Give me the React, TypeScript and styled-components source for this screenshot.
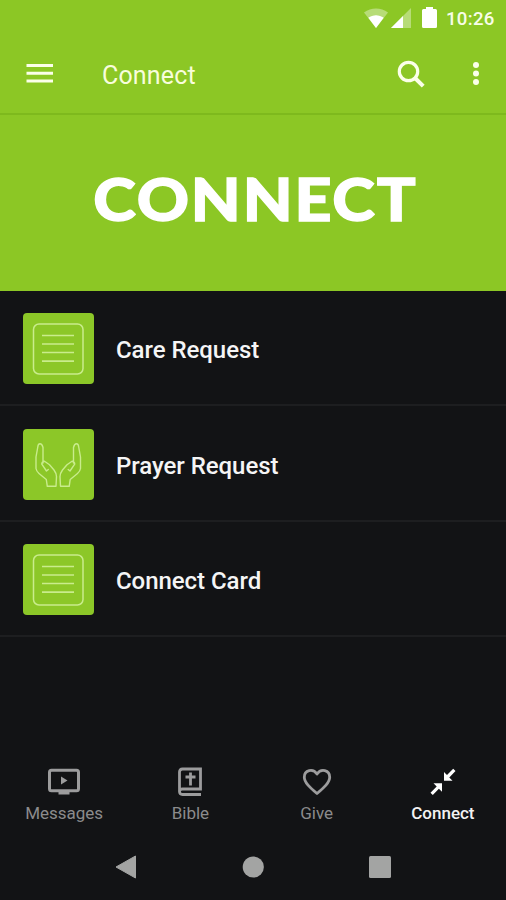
import React from "react";
import styled, { createGlobalStyle } from "styled-components";

const GlobalStyle = createGlobalStyle`
  *, *::before, *::after { box-sizing: border-box; }
  body { margin: 0; background: #121315; font-family: Roboto, sans-serif; }
  svg { display: block; flex: none; }
`;

const Screen = styled.main`
  width: 506px;
  height: 900px;
  display: flex;
  flex-direction: column;
  overflow: hidden;
  background: #121315;
  color: #fff;
`;

const Header = styled.header`
  height: 115px;
  background: #8cc725;
  border-bottom: 2px solid #7eb91d;
`;

const StatusBar = styled.div`
  height: 37px;
  display: flex;
  align-items: center;
  justify-content: flex-end;
  padding-right: 11px;
`;

const Clock = styled.span`
  width: 49px;
  margin-left: 10px;
  padding-top: 1px;
  font-size: 18.6px;
  line-height: 37px;
  font-weight: 500;
  letter-spacing: 0.3px;
  color: #f8fde9;
  white-space: nowrap;
`;

const Toolbar = styled.div`
  height: 74px;
  display: flex;
  align-items: center;
  padding: 0 26px 0 26px;
`;

const IconButton = styled.button`
  display: flex;
  padding: 0;
  border: 0;
  background: none;
  color: #fbffe9;
`;

const Title = styled.h1`
  flex: 1;
  margin: 3px 0 0 48px;
  font-size: 25px;
  line-height: 30px;
  font-weight: 400;
  letter-spacing: 0.15px;
  color: #f8fddc;
`;

const Actions = styled.div`
  display: flex;
  align-items: center;
  gap: 47px;
`;

const Banner = styled.section`
  height: 175.5px;
  display: flex;
  align-items: center;
  justify-content: center;
  background: #8cc725;
`;

const BannerText = styled.h2`
  margin: 0 0 9px 5px;
  font-family: Lato, sans-serif;
  font-size: 59.5px;
  line-height: 72px;
  font-weight: 900;
  letter-spacing: 1.7px;
  white-space: nowrap;
  -webkit-text-stroke: 1.3px #fff;
  transform: scaleX(1.085);
`;

const List = styled.nav`
  flex: 1;
`;

const Row = styled.a`
  height: 115.5px;
  display: flex;
  align-items: center;
  padding-left: 23px;
  gap: 22px;
  border-bottom: 2px solid #1d1e20;
`;

const Tile = styled.span`
  width: 71px;
  height: 71px;
  margin-top: 3px;
  border-radius: 4px;
  background: #8cc728;
  color: #c9ec8c;
`;

const RowLabel = styled.span`
  margin-top: 6px;
  font-size: 24px;
  line-height: 30px;
  font-weight: 500;
  letter-spacing: -0.05px;
  color: #f5f5f5;
`;

const Tabs = styled.nav`
  height: 67px;
  display: grid;
  grid-template-columns: repeat(4, 1fr);
  padding-left: 1px;
`;

const Tab = styled.a<{ $active?: boolean }>`
  display: flex;
  flex-direction: column;
  align-items: center;
  color: ${(p) => (p.$active ? "#fff" : "#9c9c9d")};
`;

const TabLabel = styled.span<{ $active?: boolean }>`
  margin-top: 6px;
  font-size: 17px;
  line-height: 20px;
  font-weight: ${(p) => (p.$active ? 500 : 400)};
  color: ${(p) => (p.$active ? "#f2f2f2" : "#8b8b8c")};
`;

const SystemBar = styled.footer`
  height: 66px;
  display: flex;
  justify-content: center;
  align-items: center;
  gap: 105px;
  color: #a3a4a3;
`;

const WifiIcon = () => (
  <svg width="24" height="20" viewBox="0 0 24 20">
    <path d="M12 20 0 4.600C7 -.9 17-.9 24 4.600Z" fill="#fff" opacity=".38" />
    <path d="M12 20 4.300 9.800c4.600-3.400 10.800-3.400 15.400 0Z" fill="#fff" />
  </svg>
);

const SignalIcon = () => (
  <svg width="20" height="20" viewBox="0 0 20 20">
    <path d="M20 0v20H0Z" fill="#fff" opacity=".38" />
    <path d="M12 8v12H0Z" fill="#fff" />
  </svg>
);

const BatteryIcon = () => (
  <svg width="15" height="21" viewBox="0 0 15 21">
    <path d="M4 0h7v2h2.500q1.500 0 1.500 1.500v16q0 1.500-1.500 1.500h-12Q0 21 0 19.500v-16Q0 2 1.500 2H4Z" fill="#fff" />
  </svg>
);

const StatusIcons = styled.div`
  display: flex;
  align-items: center;
  margin: 0 -1px 2px 0;
  svg + svg { margin-left: 3px; }
  svg:last-child { margin-left: 11px; }
`;

const MenuIcon = () => (
  <svg width="28" height="20" viewBox="0 0 28 20" fill="currentColor">
    <path d="M.5 0h26.500v3H.5zM.5 7.700h26.500v3H.5zM.5 15.500h26.500v3H.5z" />
  </svg>
);

const SearchIcon = () => (
  <svg width="28" height="28" viewBox="0 0 28 28" fill="none" stroke="currentColor">
    <circle cx="11.500" cy="11.500" r="9.200" strokeWidth="3.200" />
    <path d="m18 18 8.200 8.200" strokeWidth="4" />
  </svg>
);

const MoreIcon = () => (
  <svg width="8" height="24" viewBox="0 0 8 24" fill="currentColor">
    <circle cx="4" cy="3" r="3" />
    <circle cx="4" cy="11.500" r="3" />
    <circle cx="4" cy="20" r="3" />
  </svg>
);

const FormIcon = () => (
  <svg width="71" height="71" viewBox="0 0 71 71" fill="none" stroke="currentColor" strokeWidth="1.500">
    <rect x="10.500" y="11" width="49.500" height="50" rx="5.500" />
    <path d="M19 22.500h32M19 31h32M19 39.500h32M19 48.200h32" strokeWidth="1.700" />
  </svg>
);

const Hand = () => (
  <path d="M20 34V18.500Q19 14.800 17 14.800T14.700 18.500L13 28V39.500Q13.500 42.500 16 44.500L23.300 50.500 24.300 57.300H33L33.500 47.500Q33.500 44.500 31 41L26.500 35.700 21.500 32.200Q18.500 32.500 18.800 35.200L23.500 42 25.300 40.500" />
);

const HandsIcon = () => (
  <svg width="71" height="71" viewBox="0 0 71 71" fill="none" stroke="currentColor" strokeWidth="1.400" strokeLinejoin="round" strokeLinecap="round">
    <Hand />
    <g transform="matrix(-1 0 0 1 70.500 0)">
      <Hand />
    </g>
  </svg>
);

const MessagesIcon = () => (
  <svg width="34" height="30" viewBox="0 0 34 30">
    <rect x="2.500" y="3.200" width="29" height="20.500" rx="2" fill="none" stroke="currentColor" strokeWidth="3" />
    <path d="M11.500 24h11v3.500h-11zM14 9.500v8l6.500-4z" fill="currentColor" />
  </svg>
);

const BibleIcon = () => (
  <svg width="26" height="30" viewBox="0 0 26 30" fill="none" stroke="currentColor" strokeWidth="2.800">
    <path d="M24 27.500H5.500Q2.500 27.500 2.500 24.500V5Q2.500 2 5.500 2H23.500V22H5.500Q2.500 22 2.500 24.500" />
    <path d="M13.500 5.500V18.500M8.500 10H18.500" />
  </svg>
);

const HeartIcon = () => (
  <svg width="30" height="30" viewBox="0 0 30 30" fill="none" stroke="currentColor" strokeWidth="2.800" strokeLinejoin="round">
    <path d="M15 26.500C8 20.500 2.300 15.500 2.300 10.200C2.300 3 11 1 15 7C19 1 27.700 3 27.700 10.200C27.700 15.500 22 20.500 15 26.500Z" />
  </svg>
);

const ConnectIcon = () => (
  <svg width="28" height="30" viewBox="0 0 28 30">
    <path d="M15 5 18 8 24.200 1.800 26.500 4 20.300 10.400 23.500 13.700H15ZM4.500 16.200H13V24.800L9.900 21.800 3.800 28 1.500 25.700 7.700 19.500Z" fill="currentColor" />
  </svg>
);

const BackGlyph = () => (
  <svg width="22" height="24" viewBox="0 0 22 24">
    <path d="M20.500 1v22L1 12Z" fill="currentColor" stroke="currentColor" strokeLinejoin="round" />
  </svg>
);

const HomeGlyph = () => (
  <svg width="22" height="22" viewBox="0 0 22 22">
    <circle cx="11.300" cy="11" r="10.600" fill="currentColor" />
  </svg>
);

const RecentsGlyph = () => (
  <svg width="22" height="22" viewBox="0 0 22 22">
    <rect width="22" height="22" rx="1.500" fill="currentColor" />
  </svg>
);

const rows = [
  { label: "Care Request", Icon: FormIcon },
  { label: "Prayer Request", Icon: HandsIcon },
  { label: "Connect Card", Icon: FormIcon },
];

const tabs = [
  { label: "Messages", Icon: MessagesIcon },
  { label: "Bible", Icon: BibleIcon },
  { label: "Give", Icon: HeartIcon },
  { label: "Connect", Icon: ConnectIcon, active: true },
];

export default function App() {
  return (
    <>
      <GlobalStyle />
      <Screen>
        <Header>
          <StatusBar>
            <StatusIcons>
              <WifiIcon />
              <SignalIcon />
              <BatteryIcon />
            </StatusIcons>
            <Clock>10:26</Clock>
          </StatusBar>
          <Toolbar>
            <IconButton aria-label="Menu"><MenuIcon /></IconButton>
            <Title>Connect</Title>
            <Actions>
              <IconButton aria-label="Search"><SearchIcon /></IconButton>
              <IconButton aria-label="More options"><MoreIcon /></IconButton>
            </Actions>
          </Toolbar>
        </Header>
        <Banner>
          <BannerText>CONNECT</BannerText>
        </Banner>
        <List>
          {rows.map(({ label, Icon }) => (
            <Row key={label}>
              <Tile><Icon /></Tile>
              <RowLabel>{label}</RowLabel>
            </Row>
          ))}
        </List>
        <Tabs>
          {tabs.map(({ label, Icon, active }) => (
            <Tab key={label} $active={active}>
              <Icon />
              <TabLabel $active={active}>{label}</TabLabel>
            </Tab>
          ))}
        </Tabs>
        <SystemBar>
          <BackGlyph />
          <HomeGlyph />
          <RecentsGlyph />
        </SystemBar>
      </Screen>
    </>
  );
}
